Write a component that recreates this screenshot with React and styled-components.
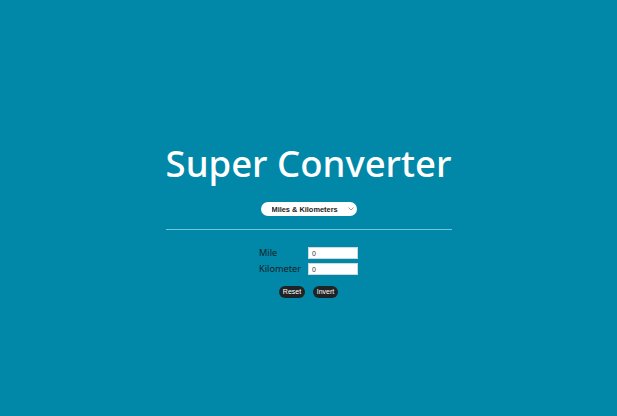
import React from "react";
import styled, { createGlobalStyle } from "styled-components";

const Global = createGlobalStyle`
  html, body { margin: 0; padding: 0; height: 100%; }
  body { background: #0188a9; font-family: "Noto Sans", sans-serif; }
  #root { height: 100%; }
`;

const Page = styled.div`
  height: 416px;
  display: flex;
  flex-direction: column;
  align-items: center;
  padding-top: 137px;
  box-sizing: border-box;
`;

const Title = styled.h1`
  margin: 0;
  font-family: "Noto Sans", sans-serif;
  font-weight: 500;
  font-size: 36.5px;
  line-height: 52px;
  color: #ffffff;
`;

const SelectWrap = styled.div`
  position: relative;
  margin-top: 13px;
  width: 96px;
  height: 14px;
`;

const Select = styled.select`
  display: block;
  appearance: none;
  width: 96px;
  height: 14px;
  border: none;
  border-radius: 7px;
  background: #ffffff;
  font-family: "Liberation Sans", Arial, sans-serif;
  font-weight: bold;
  font-size: 7.4px;
  color: #222;
  padding: 0 14px 0 11px;
  outline: none;
`;

const Chevron = styled.svg`
  position: absolute;
  z-index: 1;
  right: 3px;
  top: 5px;
  pointer-events: none;
`;

const Divider = styled.hr`
  width: 286px;
  margin: 13px 0 0 0;
  border: none;
  border-top: 1px solid #74c6da;
  height: 0;
`;

const Form = styled.div`
  margin-top: 17px;
  display: grid;
  grid-template-columns: 49px 50px;
  row-gap: 4px;
  align-items: center;
`;

const Label = styled.label`
  font-family: "Noto Sans", sans-serif;
  font-size: 9.2px;
  line-height: 12px;
  color: #172024;
`;

const Input = styled.input`
  box-sizing: border-box;
  width: 50px;
  height: 12px;
  border: 1px solid #cfd8dc;
  padding: 0 3px;
  font-family: "Liberation Sans", Arial, sans-serif;
  font-size: 7px;
  color: #333;
  background: #fff;
  outline: none;
`;

const Buttons = styled.div`
  margin-top: 11px;
  display: flex;
  gap: 8px;
`;

const Button = styled.button`
  height: 12px;
  width: ${(p) => p.$w}px;
  padding: 0;
  border: none;
  border-radius: 6px;
  background: #1f2326;
  color: #fff;
  font-family: "Liberation Sans", Arial, sans-serif;
  font-size: 7px;
  line-height: 12px;
`;

export default function App() {
  return (
    <>
      <Global />
      <Page>
        <Title>Super Converter</Title>
        <SelectWrap>
          <Select defaultValue="mk">
            <option value="mk">Miles &amp; Kilometers</option>
          </Select>
          <Chevron width="6" height="4" viewBox="0 0 6 4">
            <path d="M0.5 0.5 L3 3 L5.5 0.5" fill="none" stroke="#888" strokeWidth="0.8" />
          </Chevron>
        </SelectWrap>
        <Divider />
        <Form>
          <Label htmlFor="mile">Mile</Label>
          <Input id="mile" defaultValue="0" />
          <Label htmlFor="km">Kilometer</Label>
          <Input id="km" defaultValue="0" />
        </Form>
        <Buttons>
          <Button $w={26}>Reset</Button>
          <Button $w={25}>Invert</Button>
        </Buttons>
      </Page>
    </>
  );
}
